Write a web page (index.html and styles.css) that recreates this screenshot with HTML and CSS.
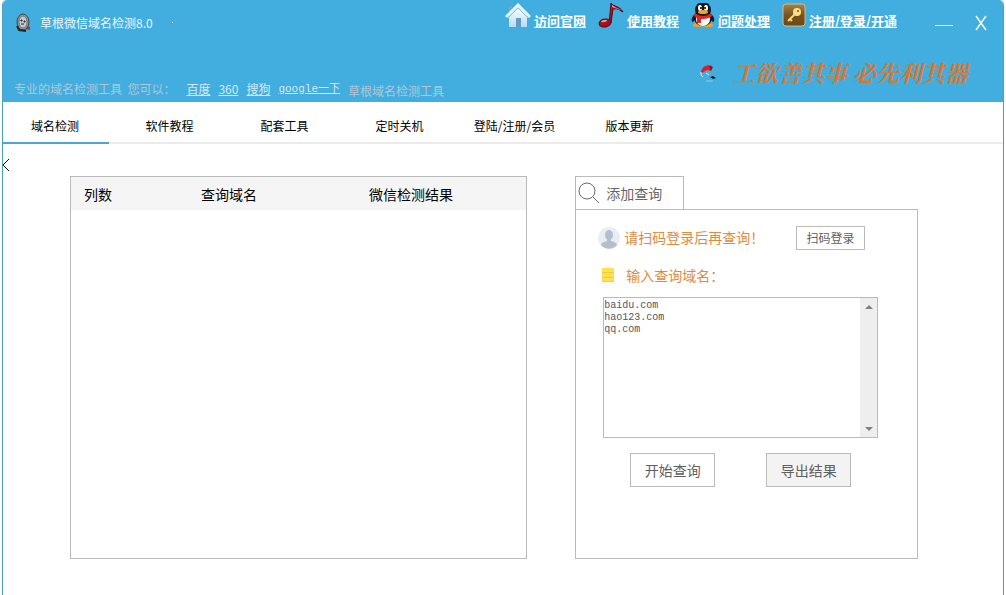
FILE: index.html
```html
<!DOCTYPE html>
<html lang="zh-CN">
<head>
<meta charset="utf-8">
<title>草根微信域名检测8.0</title>
<link rel="stylesheet" href="styles.css">
</head>
<body>
<div class="window">
  <header class="header">
    <div class="titlebar">
      <div class="brand">
        <svg class="brand-icon" width="18" height="20" viewBox="0 0 18 20" aria-hidden="true">
          <path d="M12 12l4 2v3l-5-1z" fill="#a33b40"/>
          <ellipse cx="9" cy="9" rx="6" ry="8" fill="#8e979a" stroke="#3c454a"/>
          <ellipse cx="9" cy="9" rx="4" ry="6" fill="#c3cbcd" stroke="#6c7579"/>
          <path d="M7 7h1v1h-1zM10 8h1v1h-1zM7 11h3" stroke="#1a2024" fill="none"/>
          <path d="M3 13l2 4 7 1" stroke="#22292d" stroke-width="2" fill="none"/>
        </svg>
        <h1 class="brand-name">草根微信域名检测8.0</h1>
        <span class="brand-dot"></span>
      </div>
      <nav class="quick">
        <a class="quick-link" href="#site">
          <svg width="26" height="24" viewBox="0 0 26 24" aria-hidden="true">
            <defs><linearGradient id="wall" x1="0" y1="0" x2="0" y2="1"><stop offset="0" stop-color="#fff"/><stop offset="1" stop-color="#b9dcf0"/></linearGradient></defs>
            <path d="M4 3h3v7H4z" fill="#8d9fae"/>
            <path d="M4 13l9-9 9 9v11H4z" fill="url(#wall)"/>
            <path d="M11 15h5v9h-5z" fill="#5f9dca"/>
            <path d="M1 14L13 2l12 12" fill="none" stroke="#e2f3fc" stroke-width="3"/>
            <path d="M3 15L13 5l10 10" fill="none" stroke="#8cc3e0"/>
          </svg>
          <span>访问官网</span>
        </a>
        <a class="quick-link" href="#tutorial">
          <svg width="26" height="26" viewBox="0 0 26 26" aria-hidden="true">
            <path d="M13 0c2 4 8 2 12 9l-2-1c-3-3-6-2-8-2l-2 14-2 1z" fill="#a91622" stroke="#5b0a14"/>
            <path d="M14 2c3 3 6 3 9 5-3-1-6-2-9-3z" fill="#f0a3a5"/>
            <ellipse cx="7" cy="20" rx="6" ry="4" fill="#a80f1c" stroke="#5b0a14" transform="rotate(-12 7 20)"/>
            <ellipse cx="6" cy="18" rx="3" ry="1" fill="#ef9a9c" transform="rotate(-12 6 18)"/>
          </svg>
          <span>使用教程</span>
        </a>
        <a class="quick-link" href="#help">
          <svg width="24" height="26" viewBox="0 0 24 26" aria-hidden="true">
            <ellipse cx="7" cy="22" rx="5" ry="2" fill="#f5a21b"/><ellipse cx="17" cy="22" rx="5" ry="2" fill="#f5a21b"/>
            <path d="M4 11C0 14 0 19 2 19l3-3h14l3 3c2 0 2-5-2-8z" fill="#151a20"/>
            <ellipse cx="12" cy="15" rx="9" ry="8" fill="#151a20"/>
            <ellipse cx="12" cy="16" rx="7" ry="7" fill="#fff"/>
            <ellipse cx="12" cy="7" rx="8" ry="8" fill="#151a20"/>
            <ellipse cx="9" cy="5" rx="2" ry="3" fill="#fff"/><ellipse cx="15" cy="5" rx="2" ry="3" fill="#fff"/>
            <circle cx="10" cy="5" r="1"/><circle cx="14" cy="5" r="1"/>
            <ellipse cx="12" cy="9" rx="5" ry="2" fill="#f5a21b"/>
            <path d="M4 10c4 4 12 4 16 0l1 3c-4 3-8 3-11 3v4H6v-5l-3-2z" fill="#e42322"/>
          </svg>
          <span>问题处理</span>
        </a>
        <a class="quick-link" href="#account">
          <svg width="24" height="24" viewBox="0 0 24 24" aria-hidden="true">
            <defs><linearGradient id="tile" x1="0" y1="0" x2="0" y2="1"><stop offset="0" stop-color="#a88448"/><stop offset="0.5" stop-color="#775321"/><stop offset="1" stop-color="#6b4818"/></linearGradient></defs>
            <rect x="1" y="1" width="22" height="22" rx="3" fill="url(#tile)" stroke="#d7b980"/>
            <circle cx="15" cy="9" r="4" fill="#ffe089"/><circle cx="16" cy="8" r="1" fill="#775321"/>
            <path d="M13 11l-7 7M8 16l2 2" stroke="#ffd56d" stroke-width="2"/>
          </svg>
          <span>注册/登录/开通</span>
        </a>
      </nav>
      <div class="controls">
        <button class="control" type="button" aria-label="最小化"><svg width="18" height="20" viewBox="0 0 18 20"><path d="M0 12.500h18" stroke="#d9f1fc"/></svg></button>
        <button class="control" type="button" aria-label="关闭"><svg width="12" height="20" viewBox="0 0 12 20"><path d="M1 3l10 14M11 3L1 17" stroke="#f2fbff" stroke-width="1.500" fill="none"/></svg></button>
      </div>
    </div>
    <div class="motto">
      <svg width="18" height="20" viewBox="0 0 18 20" aria-hidden="true">
        <path d="M1 9C2 4 7 1 12 3l-1 5-4-1-5 3z" fill="#dc1d2b"/><path d="M9 3l4 1-2 4z" fill="#86121d"/>
        <path d="M1 9v3l2 2M6 10l3 2" stroke="#d9f1fc" fill="none"/>
        <path d="M10 14l3-1 3 2-3 1z" fill="#15181c"/><path d="M6 18h7" stroke="#8bd0ee"/>
      </svg>
      <p class="motto-text">工欲善其事 必先利其器</p>
    </div>
    <div class="search-links">
      <span class="lead">专业的域名检测工具&nbsp; 您可以：</span>
      <a href="#baidu">百度</a>
      <a href="#360">360</a>
      <a href="#sogou">搜狗</a>
      <a class="google" href="#google">google一下</a>
      <span class="tail">草根域名检测工具</span>
    </div>
  </header>

  <nav class="tabs">
    <a class="tab active" href="#check">域名检测</a>
    <a class="tab" href="#lessons">软件教程</a>
    <a class="tab" href="#tools">配套工具</a>
    <a class="tab" href="#timer">定时关机</a>
    <a class="tab" href="#member">登陆/注册/会员</a>
    <a class="tab" href="#update">版本更新</a>
  </nav>

  <button class="back" type="button" aria-label="返回"><svg width="8" height="14" viewBox="0 0 8 14"><path d="M6 1L0 7l6 6" fill="none" stroke="#111"/></svg></button>

  <main class="main">
    <section class="results">
      <table class="result-table">
        <thead><tr><th class="col-index">列数</th><th class="col-domain">查询域名</th><th>微信检测结果</th></tr></thead>
        <tbody></tbody>
      </table>
    </section>

    <section class="query">
      <h2 class="query-tab">
        <svg width="24" height="24" viewBox="0 0 24 24" aria-hidden="true"><circle cx="10" cy="10" r="8" fill="none" stroke="#666b72"/><path d="M16 16l6 6" stroke="#666b72"/></svg>
        <span>添加查询</span>
      </h2>
      <div class="query-body">
        <div class="login-row">
          <svg width="22" height="22" viewBox="0 0 22 22" aria-hidden="true">
            <circle cx="11" cy="11" r="11" fill="#e9eef5"/>
            <ellipse cx="11" cy="8" rx="4" ry="5" fill="#b5bfcc"/>
            <path d="M9 11h4v3c4 1 6 2 6 4-4 5-12 5-16 0 0-2 2-3 6-4z" fill="#b5bfcc"/>
          </svg>
          <span class="notice">请扫码登录后再查询！</span>
          <button class="btn btn-small" type="button">扫码登录</button>
        </div>
        <div class="label-row">
          <svg width="12" height="14" viewBox="0 0 12 14" aria-hidden="true"><path d="M0 0h12v14H0z" fill="#ffe14d"/><path d="M0 4.500h12M0 9.500h12M0 13.500h12" stroke="#f2c944"/></svg>
          <label class="notice" for="domains">输入查询域名：</label>
        </div>
        <div class="editor">
          <textarea class="domains" id="domains" spellcheck="false">baidu.com
hao123.com
qq.com</textarea>
          <div class="scroll" aria-hidden="true">
            <svg width="8" height="4" viewBox="0 0 8 4"><path d="M0 4l4-4 4 4z" fill="#808080"/></svg>
            <svg width="8" height="4" viewBox="0 0 8 4"><path d="M0 0h8L4 4z" fill="#808080"/></svg>
          </div>
        </div>
        <div class="actions">
          <button class="btn" type="button">开始查询</button>
          <button class="btn btn-muted" type="button">导出结果</button>
        </div>
      </div>
    </section>
  </main>
</div>
</body>
</html>
```
FILE: styles.css
```css
* {
  box-sizing: border-box;
}

body {
  margin: 0;
  background: #fff;
  color: #000;
  font: 12px/16px "Noto Sans CJK SC", sans-serif;
}

svg {
  display: block;
  flex: none;
}

button {
  font: inherit;
}

h1,
h2,
p {
  margin: 0;
  font-weight: 400;
}

.window {
  display: flex;
  flex-direction: column;
  min-height: 100vh;
  margin: 0 2px;
  border: solid #45a3c4;
  border-width: 0 1px;
  border-radius: 5px 5px 0 0;
  overflow: hidden;
}

.header {
  display: flex;
  flex-direction: column;
  height: 102px;
  margin: 0 -1px;
  background: #42aedf;
}

.titlebar {
  display: flex;
  justify-content: space-between;
  height: 45px;
}

.brand {
  display: flex;
  align-items: center;
  gap: 8px;
  flex: 1;
  padding-left: 12px;
}

.brand-name {
  color: #e8f7ff;
  font-size: 12px;
}

.brand-dot {
  width: 1px;
  height: 1px;
  margin-left: 11px;
  background: #e8f7ff;
}

.quick {
  display: flex;
  gap: 12px;
  padding-top: 3px;
}

.quick-link {
  display: flex;
  gap: 3px;
  height: 26px;
  color: #fff;
  font-weight: 700;
  font-size: 13px;
  white-space: nowrap;
}

.quick-link span {
  padding-top: 10px;
}

.controls {
  display: flex;
  align-items: center;
  gap: 22px;
  padding: 0 17px 0 38px;
}

.control,
.back {
  padding: 0;
  border: 0;
  background: none;
}

.motto {
  display: flex;
  align-items: center;
  justify-content: flex-end;
  gap: 14px;
  height: 36px;
  padding: 20px 36px 0 0;
}

.motto-text {
  color: #d9772f;
  font: italic 700 23px/24px "Noto Serif CJK SC", "Noto Sans CJK SC", serif;
}

.search-links {
  display: flex;
  gap: 8px;
  padding-left: 12px;
  color: #b3c6d2;
}

.search-links a {
  color: #d3e9f4;
}

.lead {
  margin-right: 3px;
}

.google {
  font-family: "Liberation Mono", "Noto Sans CJK SC", monospace;
  font-size: 11px;
}

.tail {
  padding-top: 2px;
}

.tabs {
  display: flex;
  height: 42px;
  border-bottom: 2px solid #ebebeb;
}

.tab {
  display: flex;
  align-items: center;
  justify-content: center;
  width: 115px;
  height: 42px;
  padding-top: 6px;
  color: #000;
  text-decoration: none;
}

.tab.active {
  width: 106px;
  margin-right: 3px;
  padding: 8px 2px 0 0;
  border-bottom: 2px solid #4ba5d5;
}

.back {
  align-self: flex-start;
  margin: 14px 0 4px;
}

.main {
  display: grid;
  grid-template-columns: 4fr 3fr;
  gap: 48px;
  flex: 1;
  margin: 0 85px 36px 67px;
}

.results {
  border: 1px solid #bababa;
}

.result-table {
  width: 100%;
  border-collapse: collapse;
  table-layout: fixed;
  background: #f5f5f5;
}

.result-table th {
  height: 33px;
  padding: 1px 0 0 13px;
  font-size: 14px;
  font-weight: 400;
  text-align: left;
}

.result-table .col-index {
  width: 117px;
}

.result-table .col-domain {
  width: 168px;
}

.query {
  display: flex;
  flex-direction: column;
}

.query-tab {
  display: flex;
  align-items: center;
  gap: 5px;
  align-self: flex-start;
  width: 109px;
  height: 33px;
  padding-left: 1px;
  border: 1px solid #bababa;
  border-bottom: 0;
  color: #666;
  font-size: 14px;
}

.query-body {
  flex: 1;
  padding: 16px 39px 16px 22px;
  border: 1px solid #bababa;
}

.login-row,
.label-row {
  display: flex;
  align-items: center;
  gap: 4px;
}

.login-row {
  height: 24px;
  padding-right: 13px;
}

.login-row .notice {
  padding-bottom: 3px;
}

.label-row {
  gap: 12px;
  height: 22px;
  margin: 14px 0 11px 4px;
}

.notice {
  color: #e18a3e;
  font-size: 14px;
}

.btn {
  width: 85px;
  height: 34px;
  padding: 0;
  border: 1px solid #bababa;
  background: #fff;
  color: #606060;
  font-size: 14px;
}

.btn-small {
  width: 69px;
  height: 24px;
  margin-left: auto;
  font-size: 12px;
}

.btn-muted {
  background: #f3f3f3;
}

.editor {
  display: flex;
  height: 141px;
  margin-left: 5px;
  border: 1px solid #bababa;
}

.domains {
  flex: 1;
  min-width: 0;
  padding: 2px 0;
  border: 0;
  outline: 0;
  resize: none;
  overflow: hidden;
  color: #555;
  font: 10px/12px "Liberation Mono", monospace;
}

.scroll {
  display: flex;
  flex-direction: column;
  align-items: center;
  justify-content: space-between;
  width: 17px;
  padding: 7px 0 6px;
  background: #eee;
}

.actions {
  display: flex;
  gap: 51px;
  margin: 15px 0 0 32px;
}
```
